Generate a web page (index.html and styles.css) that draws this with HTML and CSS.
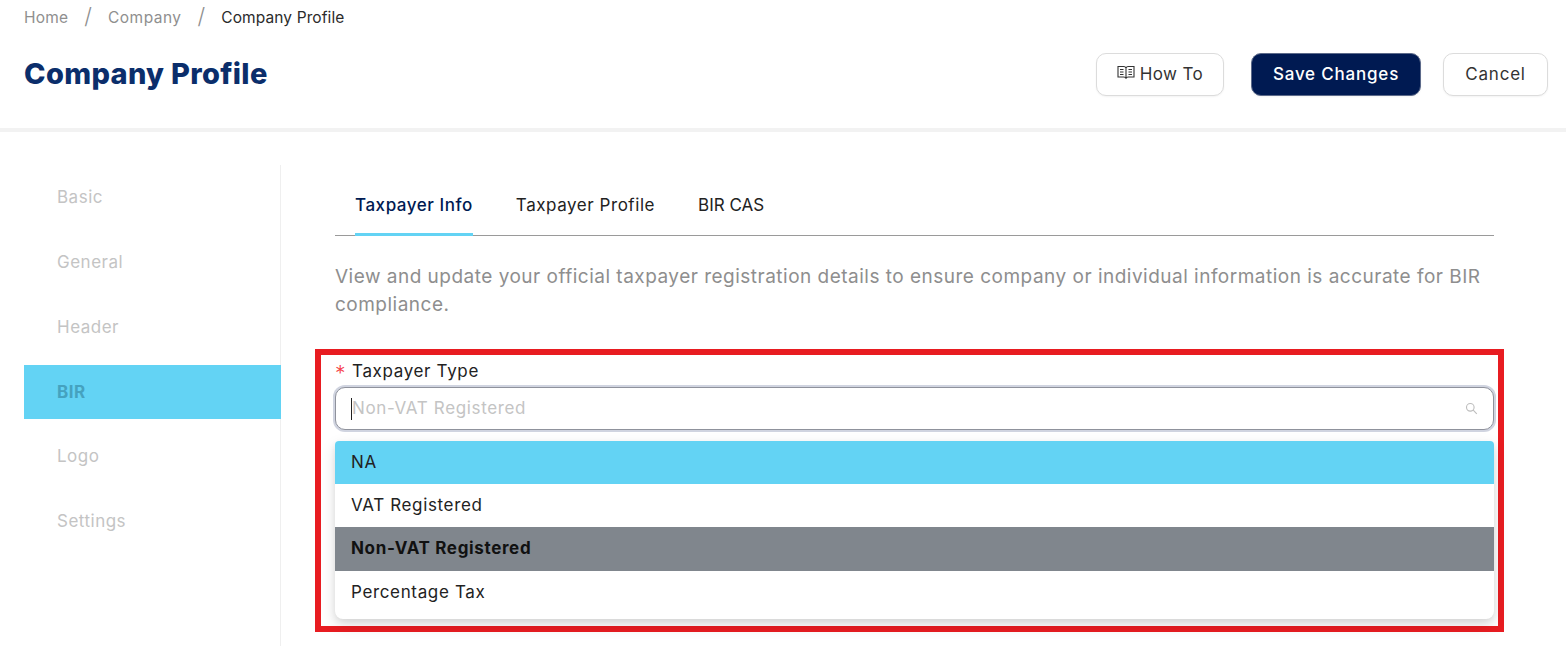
FILE: index.html
```html
<!DOCTYPE html>
<html lang="en">

<head>
    <meta charset="UTF-8">
    <meta name="viewport" content="width=device-width, initial-scale=1.0">
    <title>Company Profile</title>
    <link rel="stylesheet" href="styles.css">
</head>

<body>
    <header class="page-header">
        <nav class="breadcrumb">
            <span class="crumb">Home</span>
            <span class="crumb-sep">/</span>
            <span class="crumb">Company</span>
            <span class="crumb-sep">/</span>
            <span class="crumb current">Company Profile</span>
        </nav>
        <div class="title-row">
            <h1 class="page-title">Company Profile</h1>
            <div class="actions">
                <button class="btn btn-howto">
                    <svg class="book-icon" width="18" height="15" viewBox="0 0 18 15" fill="none" stroke="#333" stroke-width="1.100">
                        <path d="M1 1.500h5.500c1.400 0 2.500.7 2.500 2 0-1.300 1.100-2 2.500-2H17v10.500h-5.500c-1.400 0-2.500.5-2.500 1.500 0-1-1.100-1.500-2.500-1.500H1z"/>
                        <path d="M9 3.500v10M3 4.500h3.500M3 7h3.500M3 9.500h3.500M11.500 4.500H15M11.500 7H15M11.500 9.500H15"/>
                    </svg>
                    How To
                </button>
                <button class="btn btn-save">Save Changes</button>
                <button class="btn btn-cancel">Cancel</button>
            </div>
        </div>
    </header>

    <div class="page-body">
        <aside class="side-menu">
            <div class="side-item">Basic</div>
            <div class="side-item">General</div>
            <div class="side-item">Header</div>
            <div class="side-item active">BIR</div>
            <div class="side-item">Logo</div>
            <div class="side-item">Settings</div>
        </aside>

        <main class="content">
            <div class="tabs">
                <div class="tab active">Taxpayer Info</div>
                <div class="tab">Taxpayer Profile</div>
                <div class="tab tab-caps">BIR CAS</div>
            </div>
            <p class="description">View and update your official taxpayer registration details to ensure company or individual information is accurate for BIR compliance.</p>

            <section class="field-box">
                <label class="field-label"><span class="required">*</span>Taxpayer Type</label>
                <div class="select-input">
                    <span class="caret"></span>
                    <span class="placeholder">Non-VAT Registered</span>
                    <svg class="search-icon" width="13" height="13" viewBox="0 0 13 13" fill="none" stroke="#bdbdbd" stroke-width="1.100">
                        <circle cx="5.300" cy="5.300" r="3.800"/>
                        <path d="M8.200 8.200l3.600 3.600"/>
                    </svg>
                </div>
                <ul class="dropdown">
                    <li class="option highlighted">NA</li>
                    <li class="option">VAT Registered</li>
                    <li class="option selected">Non-VAT Registered</li>
                    <li class="option">Percentage Tax</li>
                </ul>
            </section>
        </main>
    </div>
</body>

</html>
```

FILE: styles.css
```css
* {
    box-sizing: border-box;
}

body {
    margin: 0;
    height: 646px;
    overflow: hidden;
    font-family: 'Inter', 'Liberation Sans', sans-serif;
    background-color: white;
    color: #222;
}

.page-header {
    height: 132px;
    padding: 0 18px 0 24px;
    border-bottom: 4px solid #f2f2f2;
}

.breadcrumb {
    display: flex;
    align-items: center;
    height: 35px;
    font-size: 15.500px;
    letter-spacing: 0.2px;
    color: #8f8f8f;
}

.crumb.current {
    color: #2b2b2b;
}

.crumb-sep {
    margin: -3px 16px 0 16px;
    font-size: 22px;
    font-weight: 300;
}

.crumb-sep + .crumb {
    letter-spacing: 0.45px;
}

.crumb-sep + .crumb.current {
    letter-spacing: 0.1px;
}

.title-row {
    display: flex;
    justify-content: space-between;
    align-items: flex-start;
    margin-top: 18px;
}

.page-title {
    margin: 0;
    font-size: 29px;
    letter-spacing: 0.33px;
    line-height: 42px;
    font-weight: 800;
    color: #0b2e6b;
}

.actions {
    display: flex;
}

.btn {
    height: 43px;
    padding: 0 0 2px;
    border: 1px solid #dcdcdc;
    border-radius: 10px;
    background-color: white;
    font-family: inherit;
    font-size: 17px;
    letter-spacing: 0.8px;
    color: #333;
    box-shadow: 0 1px 2px rgba(0, 0, 0, 0.05);
}

.btn-howto {
    width: 128px;
    display: flex;
    align-items: center;
    justify-content: center;
    gap: 5px;
    letter-spacing: 0.4px;
}

.book-icon {
    margin-top: -3px;
}

.btn-save {
    width: 170px;
    margin-left: 27px;
    background-color: #001a52;
    border-color: #5c6a8a;
    color: white;
    font-weight: 500;
}

.btn-cancel {
    width: 105px;
    margin-left: 22px;
}

.page-body {
    display: flex;
    padding: 33px 0 0 24px;
}

.side-menu {
    width: 257px;
    height: 481px;
    padding-top: 5.200px;
    border-right: 1px solid #efefef;
    flex-shrink: 0;
}

.side-item {
    display: flex;
    align-items: center;
    width: 257px;
    height: 54px;
    margin-bottom: 10.800px;
    padding-left: 33px;
    font-size: 17px;
    letter-spacing: 0.5px;
    color: #c4c4c4;
}

.side-item.active {
    background-color: #63d3f4;
    color: #45a2bf;
    font-weight: 700;
}

.content {
    width: 1159px;
    margin-left: 54px;
}

.tabs {
    display: flex;
    height: 71px;
    border-bottom: 1px solid #9a9a9a;
    padding-left: 20px;
    gap: 43px;
}

.tab {
    height: 71px;
    padding-top: 28px;
    font-size: 17px;
    letter-spacing: 0.55px;
    line-height: 24px;
    color: #222;
}

.tab-caps {
    letter-spacing: 0;
}

.tab.active {
    color: #001a52;
    font-weight: 500;
    border-bottom: 3px solid #63d3f4;
}

.description {
    margin: 27px 0 0;
    font-size: 19px;
    letter-spacing: 0.49px;
    line-height: 28px;
    color: #8e8e8e;
}

.field-box {
    width: 1189px;
    height: 283px;
    margin: 30px 0 0 -20px;
    padding: 6px 4px 6px 14px;
    border: 6px solid #e81c21;
}

.field-label {
    display: block;
    height: 20px;
    font-size: 17px;
    letter-spacing: 0.65px;
    line-height: 20px;
    color: #222;
}

.required {
    display: inline-block;
    width: 17px;
    color: #f5424a;
    font-size: 21px;
    line-height: 20px;
    font-weight: 300;
    vertical-align: -4px;
}

.select-input {
    display: flex;
    align-items: center;
    height: 43px;
    margin-top: 6px;
    padding: 0 15px;
    border: 1px solid #8f929c;
    border-radius: 10px;
    box-shadow: 0 0 0 2px #d0d4e0;
    background-color: white;
}

.caret {
    width: 1px;
    height: 22px;
    background-color: #222;
}

.placeholder {
    flex: 1;
    margin-top: -2px;
    font-size: 17px;
    letter-spacing: 0.65px;
    color: #c4c4c4;
}

.dropdown {
    list-style: none;
    margin: 11px 0 0;
    padding: 0 0 5.200px;
    border-radius: 4px 4px 8px 8px;
    overflow: hidden;
    background-color: white;
    box-shadow: 0 6px 16px rgba(0, 0, 0, 0.12), 0 3px 6px rgba(0, 0, 0, 0.08);
}

.option {
    height: 43.200px;
    padding-left: 16px;
    font-size: 17px;
    letter-spacing: 0.65px;
    line-height: 42px;
    color: #222;
}

.option.highlighted {
    background-color: #63d3f4;
}

.option.selected {
    background-color: #80868d;
    color: #111;
    font-weight: 700;
}
```
